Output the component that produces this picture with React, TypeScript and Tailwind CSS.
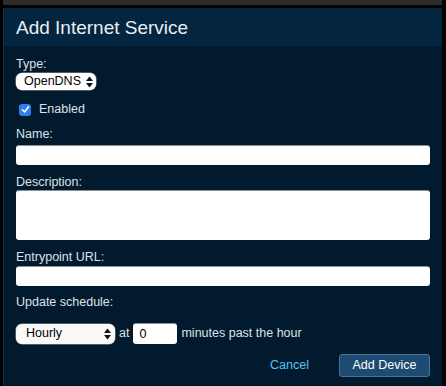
function SelectArrows() {
  return (
    <svg width="7" height="12" viewBox="0 0 7 12" className="shrink-0">
      <path d="M3.5 0.5 L7 5 L0 5 Z" fill="#111" />
      <path d="M3.5 11.5 L7 7 L0 7 Z" fill="#111" />
    </svg>
  )
}

function Label({ children, className = '' }: { children: React.ReactNode; className?: string }) {
  return <div className={`leading-[15px] text-[#dde2e6] ${className}`}>{children}</div>
}

export default function App() {
  return (
    <div
      className="w-[446px] h-[386px] bg-black pl-[3px] pr-[4px] overflow-hidden text-[12.5px]"
      style={{ fontFamily: '"Liberation Sans", Arial, sans-serif' }}
    >
      <div className="h-[5px] bg-[#2c2c2c]" />
      <div className="mt-[3px] h-[378px] flex flex-col bg-[#021a2e] border-l border-[#0c3050]">
        <div className="h-[38px] bg-[#03253f] flex items-center pl-[12px]">
          <h1 className="text-[19px] text-[#e9edf0] leading-none">Add Internet Service</h1>
        </div>

        <div className="pl-[12px] pr-[12px] pt-[11px]">
          <Label>Type:</Label>
          <div className="mt-[1px] w-[80px] h-[17px] bg-white rounded-[6px] flex items-center justify-between pl-[8px] pr-[3px] text-black shadow-[0_0_0_0.5px_#999]">
            <span className="leading-none">OpenDNS</span>
            <SelectArrows />
          </div>

          <div className="mt-[12px] h-[15px] flex items-center gap-[8px] pl-[3px]">
            <div className="w-[12px] h-[12px] rounded-[3px] bg-[#2f80ed] flex items-center justify-center">
              <svg width="9" height="9" viewBox="0 0 9 9">
                <path d="M1.5 4.8 L3.6 7 L7.6 1.8" stroke="white" strokeWidth="1.6" fill="none" strokeLinecap="round" strokeLinejoin="round" />
              </svg>
            </div>
            <span className="text-[#dde2e6] leading-none">Enabled</span>
          </div>

          <Label className="mt-[10px]">Name:</Label>
          <div className="mt-[3px] h-[20px] bg-white rounded-[3px] border-t border-[#8a8f94]" />

          <Label className="mt-[10px]">Description:</Label>
          <div className="h-[50px] bg-white rounded-[3px] border-t border-[#8a8f94]" />

          <Label className="mt-[10px]">Entrypoint URL:</Label>
          <div className="mt-[1px] h-[20px] bg-white rounded-[3px] border-t border-[#8a8f94]" />

          <Label className="mt-[9px]">Update schedule:</Label>

          <div className="mt-[13px] flex items-center gap-[4px]">
            <div className="w-[99px] h-[20px] bg-[#fafafa] rounded-[6px] flex items-center justify-between pl-[10px] pr-[4px] text-black shadow-[0_0_0_0.5px_#999]">
              <span className="leading-none">Hourly</span>
              <SelectArrows />
            </div>
            <span className="text-[#dde2e6]">at</span>
            <div className="w-[44px] h-[21px] bg-white rounded-[3px] border-t border-[#8a8f94] flex items-center pl-[6px] text-black">
              0
            </div>
            <span className="text-[#dde2e6]">minutes past the hour</span>
          </div>

          <div className="mt-[10px] flex items-center justify-end gap-[30px]">
            <button className="text-[#5cc3ea] text-[12.5px]">Cancel</button>
            <button className="h-[23px] w-[91px] bg-[#1f4a72] border border-[#44739e] rounded-[3px] text-white text-[12.5px]">
              Add Device
            </button>
          </div>
        </div>
      </div>
    </div>
  )
}
